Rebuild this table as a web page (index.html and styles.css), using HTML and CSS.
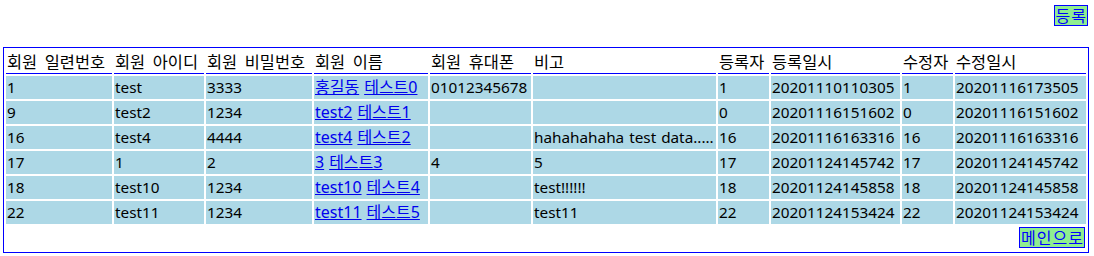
FILE: index.html
```html
<!DOCTYPE html>
<html lang="ko">
<head>
<meta charset="utf-8">
<title>회원 목록</title>
<link rel="stylesheet" href="styles.css">
</head>
<body>
<div class="page">
  <div class="top-bar">
    <a class="btn" href="#">등록</a>
  </div>
  <table class="members">
    <colgroup>
      <col class="c1"><col class="c2"><col class="c3"><col class="c4"><col class="c5">
      <col class="c6"><col class="c7"><col class="c8"><col class="c9"><col class="c10">
    </colgroup>
    <thead>
      <tr>
        <th>회원 일련번호</th><th>회원 아이디</th><th>회원 비밀번호</th><th>회원 이름</th><th>회원 휴대폰</th>
        <th>비고</th><th>등록자</th><th>등록일시</th><th>수정자</th><th>수정일시</th>
      </tr>
    </thead>
    <tbody>
      <tr>
        <td>1</td><td>test</td><td>3333</td><td><a href="#">홍길동</a> <a href="#">테스트0</a></td><td>01012345678</td>
        <td></td><td>1</td><td>20201110110305</td><td>1</td><td>20201116173505</td>
      </tr>
      <tr>
        <td>9</td><td>test2</td><td>1234</td><td><a href="#">test2</a> <a href="#">테스트1</a></td><td></td>
        <td></td><td>0</td><td>20201116151602</td><td>0</td><td>20201116151602</td>
      </tr>
      <tr>
        <td>16</td><td>test4</td><td>4444</td><td><a href="#">test4</a> <a href="#">테스트2</a></td><td></td>
        <td>hahahahaha test data.....</td><td>16</td><td>20201116163316</td><td>16</td><td>20201116163316</td>
      </tr>
      <tr>
        <td>17</td><td>1</td><td>2</td><td><a href="#">3</a> <a href="#">테스트3</a></td><td>4</td>
        <td>5</td><td>17</td><td>20201124145742</td><td>17</td><td>20201124145742</td>
      </tr>
      <tr>
        <td>18</td><td>test10</td><td>1234</td><td><a href="#">test10</a> <a href="#">테스트4</a></td><td></td>
        <td>test!!!!!!</td><td>18</td><td>20201124145858</td><td>18</td><td>20201124145858</td>
      </tr>
      <tr>
        <td>22</td><td>test11</td><td>1234</td><td><a href="#">test11</a> <a href="#">테스트5</a></td><td></td>
        <td>test11</td><td>22</td><td>20201124153424</td><td>22</td><td>20201124153424</td>
      </tr>
    </tbody>
    <tfoot>
      <tr>
        <td class="foot" colspan="10"><a class="btn" href="#">메인으로</a></td>
      </tr>
    </tfoot>
  </table>
</div>
</body>
</html>
```

FILE: styles.css
```css
html, body {
  margin: 0;
  padding: 0;
  background: #ffffff;
}

body {
  font-family: "Noto Sans", "Noto Sans CJK KR", sans-serif;
  font-size: 15.3px;
  color: #000000;
}

.page {
  padding: 5px 5px 0 3px;
}

.top-bar {
  display: flex;
  justify-content: flex-end;
  padding-right: 1px;
  margin-bottom: 21px;
}

.btn {
  display: inline-block;
  background: #90ee90;
  border: 1px solid #0000ff;
  color: #0000ff;
  text-decoration: none;
  font-family: "Noto Sans CJK KR", sans-serif;
  font-size: 16px;
  letter-spacing: 1px;
  line-height: 19px;
  padding: 0 0 0 1px;
}

.members {
  width: 100%;
  table-layout: fixed;
  border: 1px solid #0000ff;
  border-collapse: separate;
  border-spacing: 2px;
}

.c1 { width: 106px; }
.c2 { width: 90px; }
.c3 { width: 106px; }
.c4 { width: 114px; }
.c5 { width: 101px; }
.c6 { width: 183px; }
.c7 { width: 51px; }
.c8 { width: 129px; }
.c9 { width: 51px; }
.c10 { width: 131px; }

.members th,
.members td {
  padding: 1px;
  line-height: 21px;
  text-align: left;
  white-space: nowrap;
  overflow: hidden;
  vertical-align: middle;
}

.members th {
  font-family: "Noto Sans CJK KR", sans-serif;
  font-size: 16.4px;
  font-weight: normal;
  word-spacing: 3px;
  border-bottom: 1px solid #0000ff;
  background: #ffffff;
}

.members tbody td {
  background: #add8e6;
  word-spacing: 1px;
}

.members a {
  color: #0000ee;
  font-size: 16px;
}

.members td.foot {
  text-align: right;
  background: #ffffff;
  padding: 1px 1px 2px 1px;
  line-height: 19px;
  vertical-align: top;
}

.members td.foot .btn {
  color: #0000ff;
  text-decoration: none;
}
```
